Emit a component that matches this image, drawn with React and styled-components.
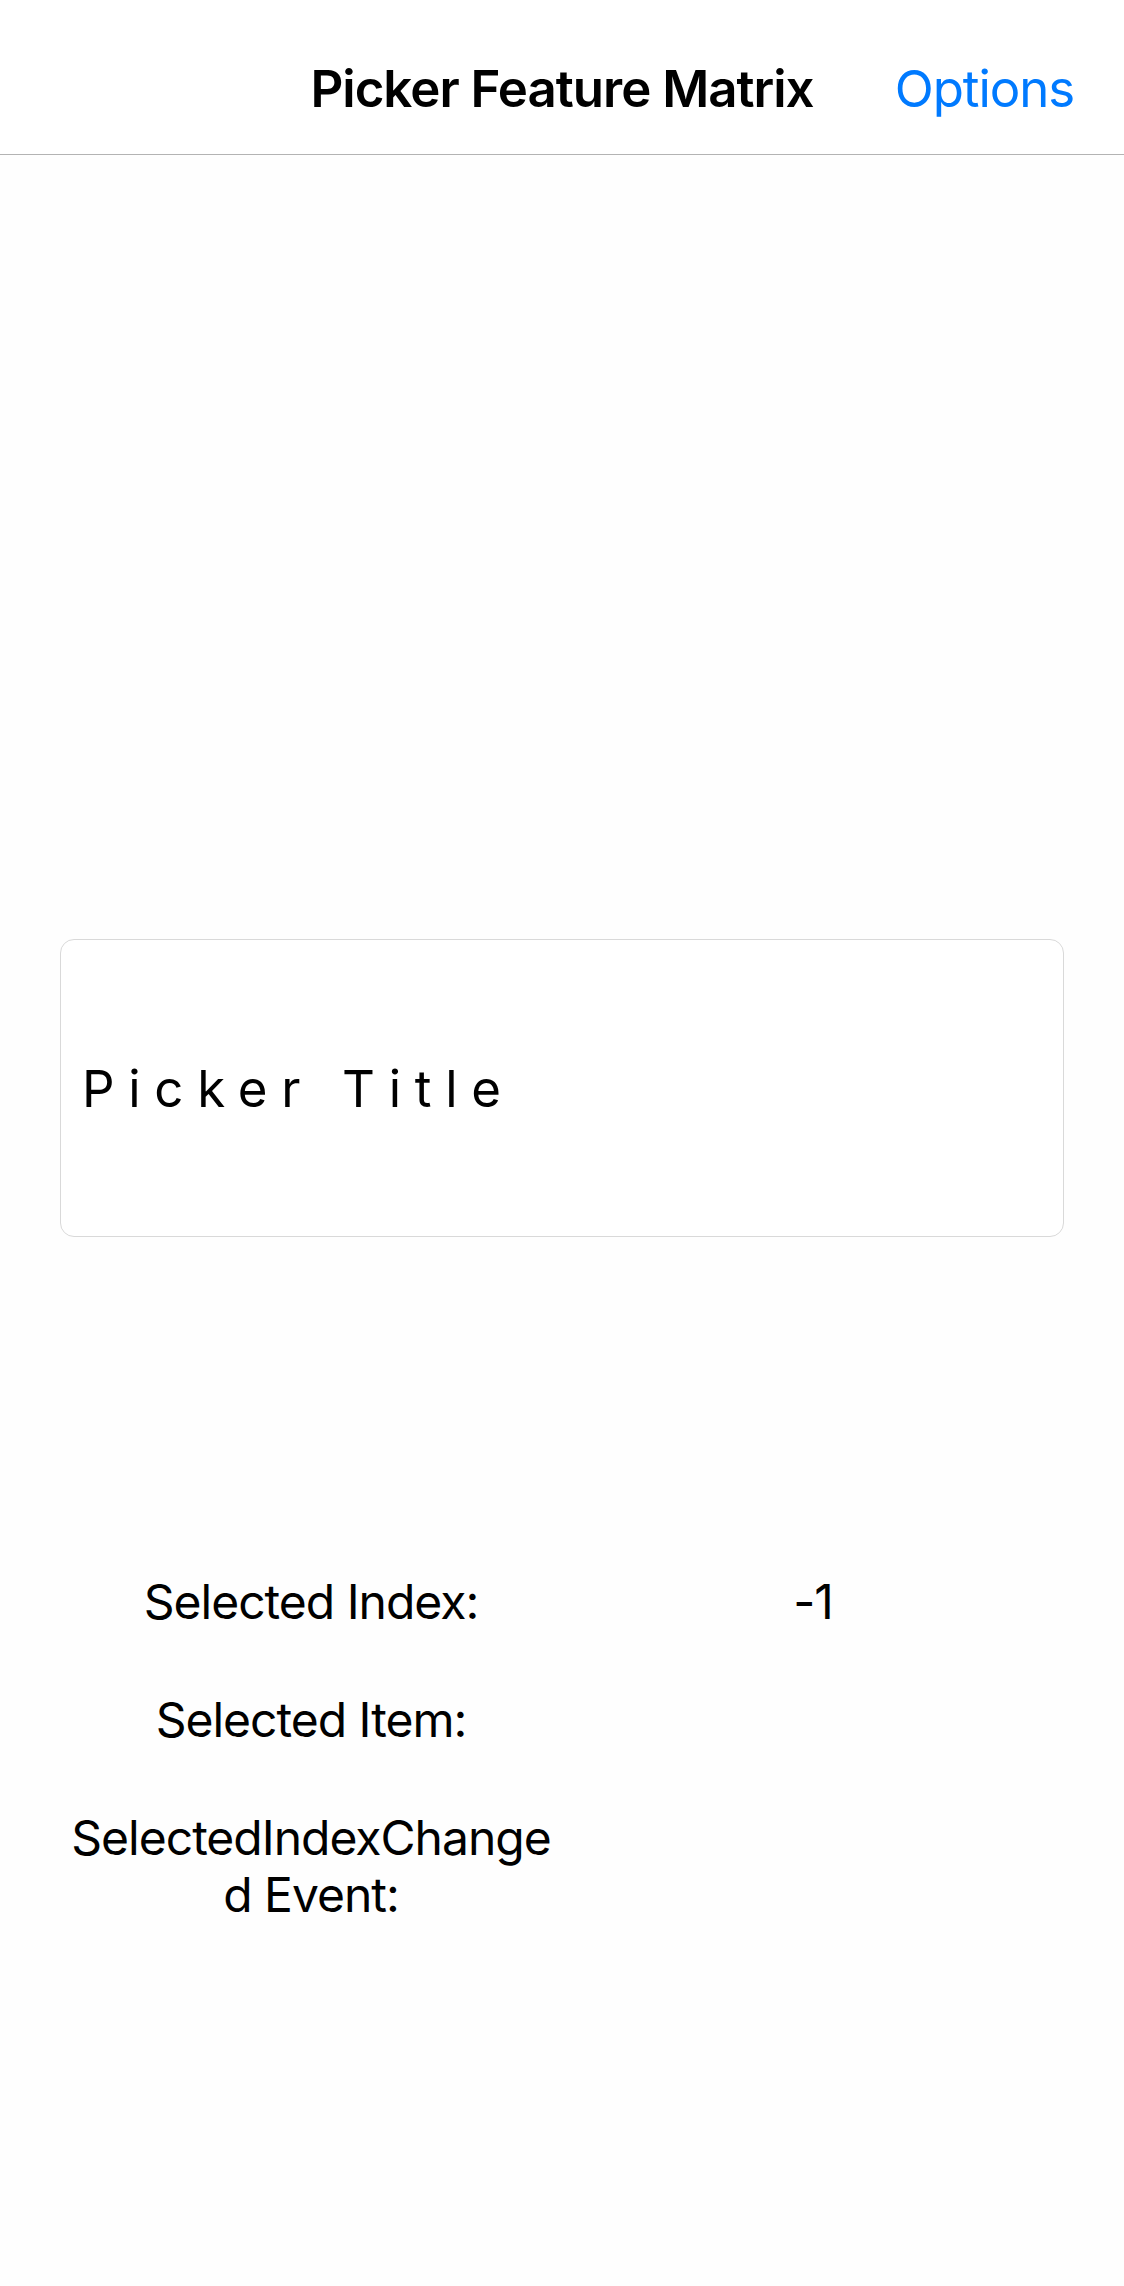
import React from 'react';
import styled, { createGlobalStyle } from 'styled-components';

const GlobalStyle = createGlobalStyle`
  body {
    margin: 0;
    background: #ffffff;
    font-family: Inter, "Noto Sans", "Liberation Sans", sans-serif;
    color: #000;
  }
`;

const Page = styled.div`
  width: 1124px;
  min-height: 2286px;
  background: #fefefe;
`;

const NavBar = styled.header`
  box-sizing: border-box;
  height: 155px;
  padding-top: 22px;
  background: #ffffff;
  border-bottom: 1px solid #b3b3b3;
  display: grid;
  grid-template-columns: 1fr auto 1fr;
  align-items: center;
`;

const NavTitle = styled.h1`
  grid-column: 2;
  margin: 0;
  font-size: 51px;
  font-weight: 600;
  letter-spacing: -1px;
`;

const NavButton = styled.button`
  grid-column: 3;
  justify-self: end;
  margin-right: 50px;
  padding: 0;
  border: none;
  background: none;
  font-family: inherit;
  font-size: 51px;
  font-weight: 400;
  letter-spacing: -1.1px;
  color: #007aff;
  cursor: pointer;
`;

const Content = styled.main`
  padding: 784px 60px 0;
`;

const PickerBox = styled.div`
  box-sizing: border-box;
  height: 298px;
  border: 1px solid #d9d9d9;
  border-radius: 14px;
  background: #ffffff;
  display: flex;
  align-items: center;
  padding-left: 21px;
`;

const PickerTitle = styled.span`
  font-size: 51px;
  font-weight: 400;
  letter-spacing: ${({ $spacing }) => $spacing}px;
`;

const InfoGrid = styled.div`
  margin-top: 336px;
  display: grid;
  grid-template-columns: 1fr 1fr;
  row-gap: 61px;
  text-align: center;
  font-size: 48px;
  line-height: 57px;
  letter-spacing: -1px;
`;

const Label = styled.div``;

const Value = styled.div``;

const rows = [
  { label: 'Selected Index:', value: '-1' },
  { label: 'Selected Item:', value: '' },
  { label: <>SelectedIndexChange<br />d Event:</>, value: '' },
];

export default function App() {
  return (
    <>
      <GlobalStyle />
      <Page>
        <NavBar>
          <NavTitle>Picker Feature Matrix</NavTitle>
          <NavButton>Options</NavButton>
        </NavBar>
        <Content>
          <PickerBox>
            <PickerTitle $spacing={13.7}>Picker Title</PickerTitle>
          </PickerBox>
          <InfoGrid>
            {rows.map((r, i) => (
              <React.Fragment key={i}>
                <Label>{r.label}</Label>
                <Value>{r.value}</Value>
              </React.Fragment>
            ))}
          </InfoGrid>
        </Content>
      </Page>
    </>
  );
}
